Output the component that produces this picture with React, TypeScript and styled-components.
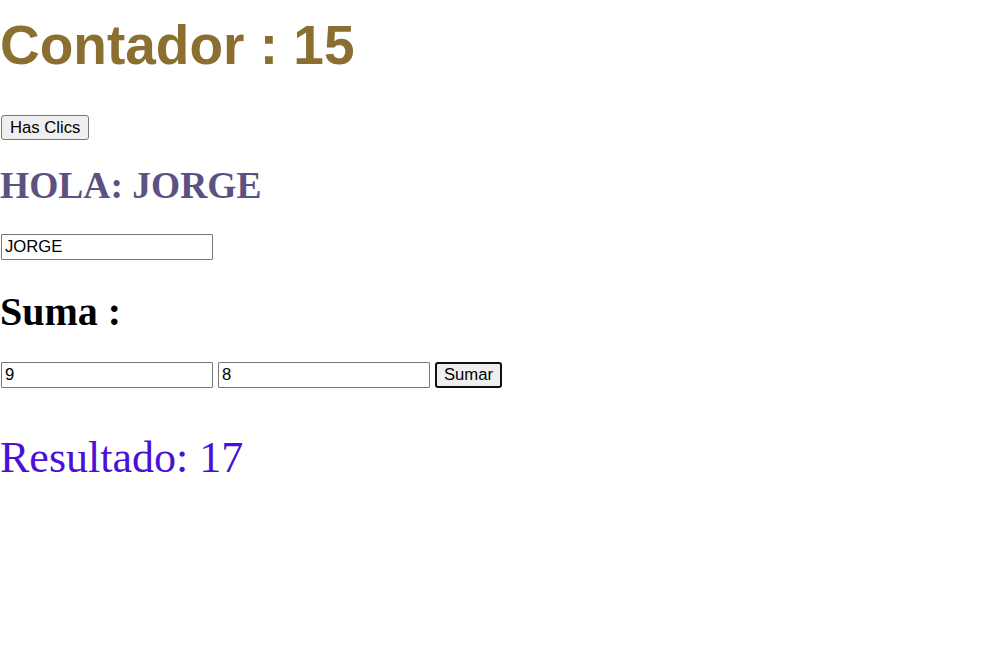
import React, { useState } from "react";
import styled, { createGlobalStyle } from "styled-components";

const GlobalStyle = createGlobalStyle`
  html, body { margin: 0; padding: 0; background: #ffffff; }
  body { font-family: "Liberation Serif", "Times New Roman", serif; }
`;

const Page = styled.div`
  display: flex;
  flex-direction: column;
  align-items: flex-start;
  padding-top: 13px;
`;

const Title = styled.h1`
  margin: 0;
  font-family: "Liberation Sans", Arial, sans-serif;
  font-weight: 700;
  font-size: 55px;
  line-height: 64px;
  color: #8b6f30;
`;

const Button = styled.button<{ $focused?: boolean }>`
  box-sizing: border-box;
  margin: ${(p) => (p.$focused ? "0" : "38px 0 0 1px")};
  height: ${(p) => (p.$focused ? "26px" : "25px")};
  padding: 0 ${(p) => (p.$focused ? "7px" : "8px")};
  font-family: "Liberation Sans", Arial, sans-serif;
  font-size: 16.67px;
  color: #000;
  background: #efefef;
  border: ${(p) => (p.$focused ? "2px solid #101010" : "1px solid #767676")};
  border-radius: 3px;
`;

const Greeting = styled.h2`
  margin: 25px 0 0 0;
  font-family: "Liberation Serif", "Times New Roman", serif;
  font-weight: 700;
  font-size: 37.5px;
  line-height: 42px;
  color: #5b5282;
`;

const TextInput = styled.input<{ $gap?: number }>`
  box-sizing: border-box;
  margin: ${(p) => p.$gap ?? 0}px 0 0 0;
  width: 212px;
  height: 26px;
  padding: 1px 3px;
  font-family: "Liberation Sans", Arial, sans-serif;
  font-size: 16.67px;
  color: #000;
  background: #fff;
  border: 1px solid #767676;
  border-radius: 1px;
  outline: none;
`;

const NameInput = styled(TextInput)`
  margin-left: 1px;
`;

const SumTitle = styled.h2`
  margin: 30px 0 0 0;
  font-family: "Liberation Serif", "Times New Roman", serif;
  font-weight: 700;
  font-size: 40px;
  line-height: 44px;
  color: #000;
`;

const SumRow = styled.div`
  display: flex;
  align-items: center;
  gap: 5px;
  margin: 28px 0 0 1px;
`;

const Result = styled.p`
  margin: 45px 0 0 0;
  font-family: "Liberation Serif", "Times New Roman", serif;
  font-size: 44px;
  line-height: 50px;
  color: #4a10d6;
`;

export default function App() {
  const [count, setCount] = useState(15);
  const [name, setName] = useState("JORGE");
  const [a, setA] = useState("9");
  const [b, setB] = useState("8");
  const [result, setResult] = useState(17);

  return (
    <>
      <GlobalStyle />
      <Page>
        <Title>Contador : {count}</Title>
        <Button onClick={() => setCount(count + 1)}>Has Clics</Button>
        <Greeting>HOLA: {name}</Greeting>
        <NameInput $gap={27} value={name} onChange={(e) => setName(e.target.value)} />
        <SumTitle>Suma :</SumTitle>
        <SumRow>
          <TextInput value={a} onChange={(e) => setA(e.target.value)} />
          <TextInput value={b} onChange={(e) => setB(e.target.value)} />
          <Button $focused onClick={() => setResult(Number(a) + Number(b))}>
            Sumar
          </Button>
        </SumRow>
        <Result>Resultado: {result}</Result>
      </Page>
    </>
  );
}
